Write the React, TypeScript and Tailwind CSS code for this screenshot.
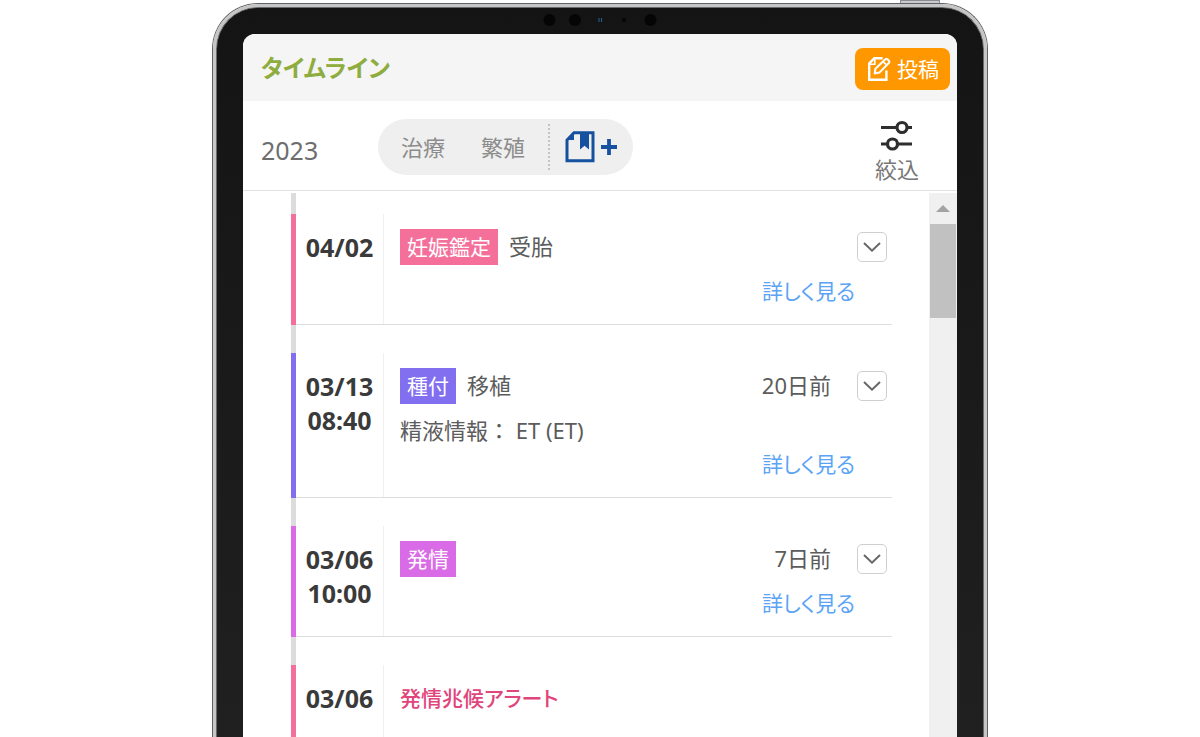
import type { ReactNode } from "react";

type Entry = {
  id: number;
  date: string;
  time?: string;
  bar: string;
  badge?: string;
  badgeColor?: string;
  title?: string;
  alert?: string;
  detail?: string;
  ago?: string;
};

const entries: Entry[] = [
  { id: 1, date: "04/02", bar: "bg-[#f4709b]", badge: "妊娠鑑定", badgeColor: "bg-[#f4709b]", title: "受胎" },
  {
    id: 2,
    date: "03/13",
    time: "08:40",
    bar: "bg-[#826ff0]",
    badge: "種付",
    badgeColor: "bg-[#826ff0]",
    title: "移植",
    detail: "精液情報： ET (ET)",
    ago: "20日前"
  },
  {
    id: 3,
    date: "03/06",
    time: "10:00",
    bar: "bg-[#da6be6]",
    badge: "発情",
    badgeColor: "bg-[#da6be6]",
    ago: "7日前"
  },
  { id: 4, date: "03/06", bar: "bg-[#f4709b]", alert: "発情兆候アラート" }
];

function PostIcon() {
  return (
    <svg className="h-[26px] w-6" viewBox="0 0 24 26" fill="none" stroke="currentColor" strokeWidth="2.4" aria-hidden="true">
      <path d="M15.6 2.2H7.4L2.2 7.6V23.8H19.4V14.6" />
      <path d="M2.2 8.2H7.8V2.6" strokeWidth="1.6" />
      <path d="M7.6 17.6L8.4 12.8L18.4 3.2Q19.4 2.4 20.4 3.2L22 4.8Q22.8 5.8 22 6.8L12.4 16.6Z" strokeWidth="2" strokeLinejoin="round" />
      <path d="M16 5.6L19.8 9.2" strokeWidth="1.6" />
    </svg>
  );
}

function BookmarkIcon() {
  return (
    <svg className="h-8 w-[30px]" viewBox="0 0 30 32" aria-hidden="true">
      <path d="M9 1.8H28V29.8H2V9Z" fill="none" stroke="#15519f" strokeWidth="3" />
      <path d="M1 9L9 1V9Z" fill="#15519f" />
      <path d="M15 2H24V18.6L19.5 14.8L15 18.6Z" fill="#15519f" />
    </svg>
  );
}

function FilterIcon() {
  return (
    <svg className="h-8 w-8" viewBox="0 0 32 32" fill="none" stroke="#2e2e2e" strokeWidth="3.2" aria-hidden="true">
      <path d="M0 7.5H15.5M26 7.5H31M0 24H6.5M17 24H31" />
      <circle cx="21" cy="7.5" r="5" />
      <circle cx="11.5" cy="24" r="5" />
    </svg>
  );
}

function Sensors() {
  return (
    <svg className="h-[14px] w-[114px]" viewBox="0 0 114 14" aria-hidden="true">
      <circle cx="6.5" cy="7" r="6" fill="#050505" />
      <circle cx="32" cy="7" r="6" fill="#050505" />
      <circle cx="57" cy="7" r="3" fill="#101820" />
      <path d="M56 5V9M58.5 5V9" stroke="#2c6079" strokeWidth="1" />
      <circle cx="81" cy="7" r="2" fill="#050505" />
      <circle cx="107.5" cy="7" r="6" fill="#050505" />
    </svg>
  );
}

function Tablet({ children }: { children: ReactNode }) {
  return (
    <div className="mx-auto flex h-screen w-full max-w-[776px] flex-col overflow-hidden">
      <div className="flex shrink-0 justify-end pr-12">
        <div className="h-[3px] w-10 border-x border-t border-[#8a8a90] bg-[#c9c9cf]" />
      </div>
      <div className="flex min-h-0 flex-1 flex-col rounded-t-[46px] border border-b-0 border-[#626262]">
        <div className="flex min-h-0 flex-1 flex-col rounded-t-[45px] border-3 border-b-0 border-[#c4c6c8]">
          <div className="flex min-h-0 flex-1 flex-col rounded-t-[42px] border border-b-0 border-[#6a6a6a] bg-linear-to-b from-[#141414] to-[#202020] px-[26px]">
            <div className="flex h-[26px] shrink-0 items-center justify-center pb-[2px]">
              <Sensors />
            </div>
            <div className="flex min-h-0 flex-1 flex-col overflow-hidden rounded-t-xl bg-white">{children}</div>
          </div>
        </div>
      </div>
    </div>
  );
}

function TimelineRow({ entry }: { entry: Entry }) {
  return (
    <div className="flex">
      <div className={`w-[5px] shrink-0 ${entry.bar}`} />
      <div className="flex min-w-0 flex-1 border-b border-[#dedede]">
        <div className="w-[88px] shrink-0 border-r border-[#f0f0f0] pt-4 text-center text-[25px] leading-[34px] font-bold text-[#3a3a3a]">
          <time className="block">{entry.date}</time>
          {entry.time && <time className="block">{entry.time}</time>}
        </div>
        <div className="min-w-0 flex-1 pt-[15px] pr-[5px] pb-4 pl-4">
          <div className="mb-[9px] flex h-9 items-center">
            {entry.badge && (
              <span className={`mr-[11px] px-[7px] text-[21px] leading-9 text-white ${entry.badgeColor}`}>{entry.badge}</span>
            )}
            {entry.title && <span className="pb-[2px]">{entry.title}</span>}
            {entry.alert && (
              <strong className="text-[21px] font-medium text-[#e0457c] [font-feature-settings:'palt']">{entry.alert}</strong>
            )}
            {entry.ago && <span className="ml-auto pb-[2px]">{entry.ago}</span>}
            {!entry.alert && (
              <button
                type="button"
                aria-label="メニューを開く"
                className={`flex size-[30px] items-center justify-center rounded-[5px] border border-[#cfcfcf] bg-white ${entry.ago ? "ml-[26px]" : "ml-auto"}`}
              >
                <svg className="h-[10px] w-[18px]" viewBox="0 0 18 10" fill="none" stroke="#666" strokeWidth="2" aria-hidden="true">
                  <path d="M1 1L9 8.6L17 1" />
                </svg>
              </button>
            )}
          </div>
          {entry.detail && <p className="leading-[34px]">{entry.detail}</p>}
          <div className="flex h-[34px] items-center justify-end pr-8">
            {!entry.alert && (
              <a href="#detail" className="text-[21px] text-[#5ba4f5] [font-feature-settings:'palt']">
                詳しく見る
              </a>
            )}
          </div>
        </div>
      </div>
    </div>
  );
}

export default function App() {
  return (
    <div className="bg-white font-['Noto_Sans','Noto_Sans_CJK_JP',sans-serif] text-[22px] leading-[34px] text-[#5c5c5c]">
      <Tablet>
        <header className="flex h-[67px] shrink-0 items-center justify-between bg-[#f5f5f5] pt-0.5 pr-[7px] pl-[18px]">
          <h1 className="pb-0.5 text-2xl font-bold text-[#8fac3f] [font-feature-settings:'palt']">タイムライン</h1>
          <button type="button" className="flex h-[42px] items-center gap-1.5 rounded-lg bg-[#ff9800] pr-[11px] pl-3 text-[21px] text-white">
            <PostIcon />
            投稿
          </button>
        </header>

        <div className="flex h-[90px] shrink-0 items-center border-b border-[#e2e2e2] pt-0.5 pr-[38px] pl-[18px]">
          <span className="w-[117px] pt-1.5 text-[25px] text-[#6e6e6e]">2023</span>
          <div className="flex h-14 items-center rounded-full bg-[#efefef] pr-4 pl-[23px] text-[#8c8c8c]">
            <button type="button">治療</button>
            <button type="button" className="ml-9">
              繁殖
            </button>
            <span className="ml-[23px] h-[46px] border-l-2 border-dotted border-[#c4c4c4]" />
            <button type="button" aria-label="ブックマークを追加" className="ml-[15px] flex items-center gap-1.5">
              <BookmarkIcon />
              <svg className="size-4" viewBox="0 0 16 16" stroke="#15519f" strokeWidth="3.8" aria-hidden="true">
                <path d="M8 0V16M0 8H16" />
              </svg>
            </button>
          </div>
          <button type="button" className="ml-auto flex flex-col items-center pt-3 text-[#777]">
            <FilterIcon />
            <span>絞込</span>
          </button>
        </div>

        <div className="flex min-h-0 flex-1 pt-[2px]">
          <ul className="min-w-0 flex-1 pr-[37px] pl-12">
            {entries.map((entry, index) => (
              <li key={entry.id}>
                <div className={`w-[5px] bg-[#dcdcdc] ${index === 0 ? "h-[21px]" : "h-7"}`} />
                <TimelineRow entry={entry} />
              </li>
            ))}
          </ul>
          <div className="w-7 shrink-0 bg-[#f0f0f0] px-px" aria-hidden="true">
            <div className="flex h-[31px] items-center justify-center">
              <svg className="h-[7px] w-[14px]" viewBox="0 0 14 7" fill="#a3a3a3">
                <path d="M7 0L14 7H0Z" />
              </svg>
            </div>
            <div className="h-[94px] bg-[#c1c1c1]" />
          </div>
        </div>
      </Tablet>
    </div>
  );
}
